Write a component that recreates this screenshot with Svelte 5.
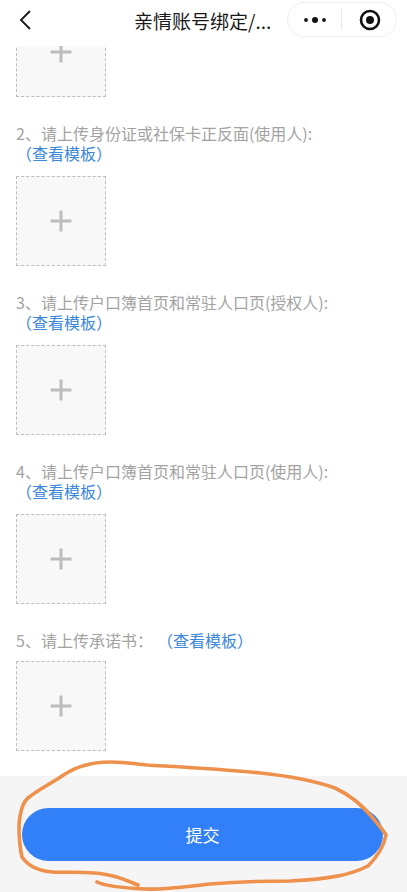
<script>
  const items = [
    { label: '2、请上传身份证或社保卡正反面(使用人):', inline: false },
    { label: '3、请上传户口簿首页和常驻人口页(授权人):', inline: false },
    { label: '4、请上传户口簿首页和常驻人口页(使用人):', inline: false },
    { label: '5、请上传承诺书：', inline: true }
  ];
</script>

<div class="page">
  <header class="nav">
    <svg class="back" viewBox="0 0 14 22" width="14" height="22" aria-hidden="true">
      <path d="M12 2 L3 11 L12 20" fill="none" stroke="#1a1a1a" stroke-width="1.9" />
    </svg>
    <div class="title">亲情账号绑定/...</div>
    <div class="capsule">
      <div class="cap-side left">
        <svg viewBox="0 0 22 8" width="22" height="8" aria-hidden="true">
          <circle cx="2" cy="4" r="1.9" fill="#111" /><circle cx="11" cy="4" r="3" fill="#111" /><circle cx="20" cy="4" r="1.9" fill="#111" />
        </svg>
      </div>
      <div class="cap-line"></div>
      <div class="cap-side right">
        <svg viewBox="0 0 22 22" width="22" height="22" aria-hidden="true">
          <circle cx="11" cy="11" r="9" fill="none" stroke="#111" stroke-width="2.6" /><circle cx="11" cy="11" r="4" fill="#111" />
        </svg>
      </div>
    </div>
  </header>

  <main class="content">
    <div class="upload first"><span class="plus"></span></div>
    {#each items as item}
      <section class="item">
        <div class="label">{item.label}<a class="link" class:inline={item.inline} href="#t">（查看模板）</a></div>
        <div class="upload"><span class="plus"></span></div>
      </section>
    {/each}
  </main>

  <footer class="footer">
    <button class="submit" type="button">提交</button>
  </footer>

  <svg class="scribble" viewBox="0 0 407 892" width="407" height="892" aria-hidden="true">
    <path d="M138 885 C128 881 118 876 103 874 C85 871 70 873 53 872 C38 871 28 866 22 857 C19 845 19 835 19 825 C20 812 22 803 28 798 C38 790 50 784 62 776 C75 767 90 762 110 762 C125 762 135 764 147 765 C180 767 220 769 260 773 C290 776 315 781 335 788 C352 796 362 805 372 817 C378 824 383 830 386 835 C384 845 378 856 368 866 C350 875 330 879 290 881 C260 881 235 882 210 884 C190 886 165 890 145 889 C125 888 105 886 97 882" fill="none" stroke="#ee914d" stroke-width="3.6" stroke-linecap="round" stroke-linejoin="round" />
  </svg>
</div>

<style>
  :global(body) {
    margin: 0;
    background: #fff;
  }
  .page {
    position: relative;
    width: 407px;
    height: 892px;
    overflow: hidden;
    display: flex;
    flex-direction: column;
    background: #fff;
    font-family: "Noto Sans CJK SC", "Noto Sans", sans-serif;
  }
  .nav {
    position: absolute;
    top: 0;
    left: 0;
    right: 0;
    height: 46px;
    background: #fff;
    z-index: 1;
  }
  .back {
    position: absolute;
    left: 18px;
    top: 9px;
  }
  .title {
    position: absolute;
    left: 134px;
    top: 8px;
    font-size: 19px;
    line-height: 26px;
    color: #1a1a1a;
    white-space: nowrap;
  }
  .capsule {
    position: absolute;
    left: 287px;
    top: 2px;
    width: 110px;
    height: 35px;
    box-sizing: border-box;
    border: 1px solid #efefef;
    border-radius: 18px;
    display: flex;
    align-items: center;
  }
  .cap-side {
    display: flex;
    justify-content: center;
    align-items: center;
  }
  .cap-side.left {
    width: 53px;
  }
  .cap-side.right {
    flex: 1;
    padding-left: 2px;
  }
  .cap-line {
    width: 1px;
    height: 21px;
    background: #e8e8e8;
  }
  .content {
    flex: 1;
    padding: 7px 16px 0;
    display: flex;
    flex-direction: column;
    gap: 26px;
  }
  .item {
    display: flex;
    flex-direction: column;
    gap: 13px;
  }
  .item:last-child {
    gap: 11px;
  }
  .label {
    font-size: 16px;
    line-height: 20px;
    color: #a3a3a3;
  }
  .link {
    display: block;
    color: #3b87db;
    font-size: 16px;
    text-decoration: none;
  }
  .link.inline {
    display: inline;
    margin-left: 12px;
  }
  .upload {
    width: 90px;
    height: 90px;
    box-sizing: border-box;
    border: 1px dashed #bdbdbd;
    background: #f8f8f8;
    position: relative;
    flex: none;
  }
  .plus {
    position: absolute;
    left: 50%;
    top: 50%;
    width: 21px;
    height: 21px;
    transform: translate(-50%, -50%);
    background:
      linear-gradient(#bcbcbc, #bcbcbc) center / 21px 3px no-repeat,
      linear-gradient(#bcbcbc, #bcbcbc) center / 3px 21px no-repeat;
  }
  .footer {
    height: 116px;
    box-sizing: border-box;
    background: #f5f5f5;
    padding: 32px 24px 0 22px;
    flex: none;
  }
  .submit {
    display: block;
    width: 361px;
    height: 53px;
    border: 0;
    border-radius: 27px;
    background: #3280f8;
    color: #fff;
    font-family: inherit;
    font-size: 17px;
    padding: 0;
  }
  .scribble {
    position: absolute;
    top: 0;
    left: 0;
    z-index: 2;
    pointer-events: none;
  }
</style>
